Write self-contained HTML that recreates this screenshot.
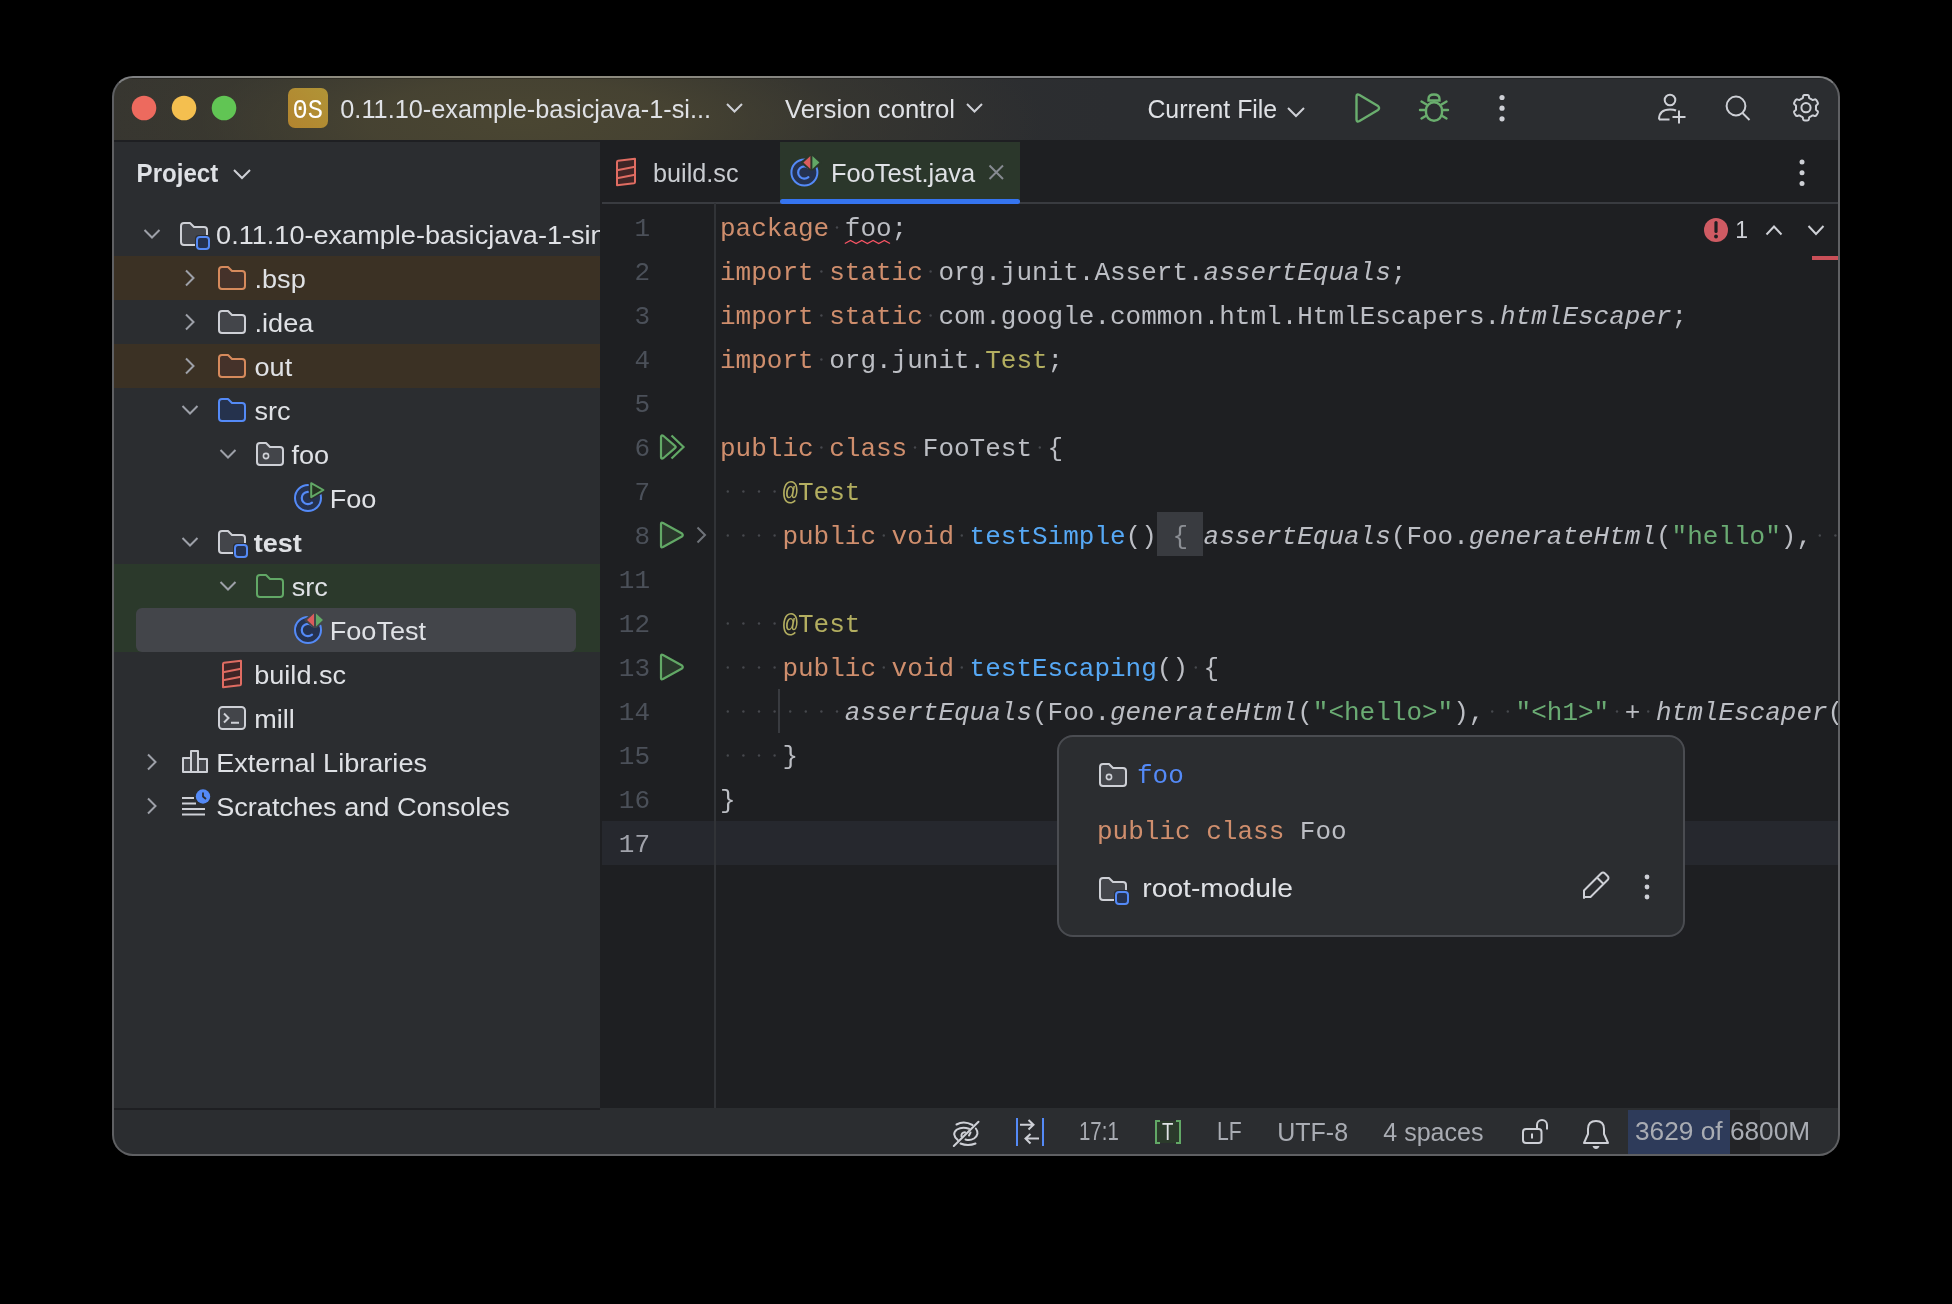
<!DOCTYPE html>
<html><head><meta charset="utf-8">
<style>
*{margin:0;padding:0;box-sizing:border-box}
html,body{width:1952px;height:1304px;background:#000;overflow:hidden}
body{position:relative;font-family:"Liberation Sans",sans-serif;color:#dfe1e5}
.a{position:absolute}
#win{position:absolute;left:0;top:0;width:1952px;height:1304px;clip-path:inset(77px 113px 149px 113px round 20px);background:#2b2d30}
#frame{position:absolute;left:112px;top:76px;width:1728px;height:1080px;border:2px solid #5f6063;border-top-color:#7f8082;border-radius:21px}
svg.ov{position:absolute;left:0;top:0;width:1952px;height:1304px;overflow:visible;will-change:transform}
.s{font-family:"Liberation Sans",sans-serif;font-size:26px}
.m{font-family:"Liberation Mono",monospace;font-size:26px}
</style></head><body>
<div id="win">
  <div class="a" style="left:113px;top:77px;width:1726px;height:63px;background:radial-gradient(ellipse 520px 140px at 410px 45px, rgba(74,70,50,1) 0%, rgba(72,68,50,0.9) 30%, rgba(62,60,48,0.5) 62%, rgba(43,45,48,0) 100%), linear-gradient(to right, #353430 0px, #33332f 200px, #2e2f30 700px, #2b2d30 1000px)"></div>
  <div class="a" style="left:113px;top:78px;width:1726px;height:1px;background:rgba(0,0,0,0.22)"></div>
  <div class="a" style="left:113px;top:140px;width:1726px;height:2px;background:#1e1f22"></div>
  <div class="a" style="left:113px;top:142px;width:487px;height:966px;background:#2b2d30"></div>
  <div class="a" style="left:113px;top:256px;width:487px;height:44px;background:#3b3124"></div>
  <div class="a" style="left:113px;top:344px;width:487px;height:44px;background:#3b3124"></div>
  <div class="a" style="left:113px;top:564px;width:487px;height:88px;background:#2b392b"></div>
  <div class="a" style="left:136px;top:608px;width:440px;height:44px;background:#43454a;border-radius:6px"></div>
  <div class="a" style="left:600px;top:142px;width:2px;height:966px;background:#1e1f22"></div>
  <div class="a" style="left:602px;top:142px;width:1237px;height:966px;background:#1e1f22"></div>
  <div class="a" style="left:780px;top:142px;width:240px;height:61px;background:#2b372b"></div>
  <div class="a" style="left:602px;top:202px;width:1237px;height:2px;background:#393b40"></div>
  <div class="a" style="left:780px;top:198.5px;width:240px;height:5.5px;background:#3574f0;border-radius:3px"></div>
  <div class="a" style="left:602px;top:821px;width:1237px;height:44px;background:#26282e"></div>
  <div class="a" style="left:714px;top:203px;width:2px;height:905px;background:#313337"></div>
  <div class="a" style="left:1157px;top:512px;width:46px;height:44px;background:#393b40"></div>
  <div class="a" style="left:778px;top:689px;width:2px;height:44px;background:#393b40"></div>
  <div class="a" style="left:1812px;top:256px;width:27px;height:4px;background:#c94f58"></div>
  <div class="a" style="left:113px;top:1108px;width:487px;height:2px;background:#1e1f22"></div>
  <div class="a" style="left:113px;top:1110px;width:1726px;height:46px;background:#2b2d30"></div>
  <div class="a" style="left:1628px;top:1110px;width:102px;height:46px;background:#2e3b5a"></div>
  <div class="a" style="left:1730px;top:1110px;width:30px;height:46px;background:#232427"></div>
  <svg class="ov" viewBox="0 0 1952 1304">
<circle cx="144" cy="108" r="12.3" fill="#ed6a5e"/>
<circle cx="184" cy="108" r="12.3" fill="#f4bf4f"/>
<circle cx="224" cy="108" r="12.3" fill="#61c554"/>
<defs><linearGradient id="bg1" x1="0" y1="1" x2="1" y2="0"><stop offset="0" stop-color="#b3842f"/><stop offset="1" stop-color="#b09436"/></linearGradient></defs>
<rect x="288" y="88" width="40" height="40" rx="7" fill="url(#bg1)"/>
<text class="m" x="292.6" y="118" style="font-size:28px" fill="#fff" textLength="30.5" lengthAdjust="spacingAndGlyphs">0S</text>
<text class="s" x="340.3" y="118" style="font-size:26px" fill="#dfe1e5" textLength="370.7" lengthAdjust="spacingAndGlyphs">0.11.10-example-basicjava-1-si...</text>
<path d="M727 104 L734.5 111.5 L742 104" fill="none" stroke="#ced0d6" stroke-width="2"/>
<text class="s" x="785.0" y="118" style="font-size:26px" fill="#dfe1e5" textLength="170.0" lengthAdjust="spacingAndGlyphs">Version control</text>
<path d="M967 104 L974.5 111.5 L982 104" fill="none" stroke="#ced0d6" stroke-width="2"/>
<text class="s" x="1147.4" y="118" style="font-size:26px" fill="#dfe1e5" textLength="129.8" lengthAdjust="spacingAndGlyphs">Current File</text>
<path d="M1288 108 L1296 116 L1304 108" fill="none" stroke="#ced0d6" stroke-width="2"/>
<path d="M1356.5 96.5 Q1356.5 93.5 1359.5 95 L1378 106 Q1380 108 1378 110 L1359.5 121 Q1356.5 122.5 1356.5 119.5 Z" fill="none" stroke="#6aae6e" stroke-width="2.4" stroke-linejoin="round"/>
<g fill="none" stroke="#6aae6e" stroke-width="2.4" stroke-linecap="round">
<path d="M1428.5 100.5 V99 Q1428.5 94.5 1434 94.5 Q1439.5 94.5 1439.5 99 V100.5 Z"/>
<rect x="1426" y="102.3" width="16" height="18.5" rx="8"/>
<path d="M1421.5 101.5 L1426.5 104.5 M1446.5 101.5 L1441.5 104.5 M1420 110 L1425 110 M1448 110 L1443 110 M1421.5 118.5 L1426.5 115.5 M1446.5 118.5 L1441.5 115.5"/></g>
<circle cx="1502" cy="97.5" r="2.6" fill="#ced0d6"/>
<circle cx="1502" cy="108.2" r="2.6" fill="#ced0d6"/>
<circle cx="1502" cy="118.8" r="2.6" fill="#ced0d6"/>
<g fill="none" stroke="#ced0d6" stroke-width="2">
<circle cx="1670" cy="100" r="5.3"/>
<path d="M1659 119.5 Q1659 109.5 1670 109.5 Q1674 109.5 1676 110.5 M1659 119.5 L1669.5 119.5 M1672.5 117 H1685.5 M1679 110.5 V123.5"/>
<circle cx="1736" cy="106" r="9.4"/><path d="M1742.5 113 L1749.5 120"/></g>
<path fill="none" stroke="#ced0d6" stroke-width="2" stroke-linejoin="round" d="M1816.00 107.70 L1816.00 107.44 L1815.99 107.18 L1815.97 106.92 L1815.96 106.65 L1815.94 106.39 L1815.94 106.13 L1815.97 105.85 L1816.11 105.55 L1816.45 105.19 L1817.01 104.75 L1817.55 104.28 L1817.85 103.85 L1817.93 103.47 L1817.89 103.13 L1817.80 102.81 L1817.68 102.50 L1817.55 102.19 L1817.40 101.89 L1817.25 101.59 L1817.09 101.30 L1816.91 101.01 L1816.73 100.73 L1816.54 100.45 L1816.35 100.18 L1816.13 99.92 L1815.90 99.68 L1815.63 99.48 L1815.26 99.36 L1814.74 99.41 L1814.06 99.64 L1813.40 99.90 L1812.92 100.02 L1812.59 99.99 L1812.33 99.88 L1812.10 99.75 L1811.88 99.60 L1811.67 99.45 L1811.45 99.31 L1811.23 99.17 L1811.00 99.04 L1810.77 98.91 L1810.54 98.79 L1810.31 98.67 L1810.07 98.55 L1809.84 98.44 L1809.60 98.31 L1809.39 98.14 L1809.19 97.87 L1809.05 97.39 L1808.95 96.69 L1808.81 95.98 L1808.59 95.51 L1808.31 95.25 L1807.99 95.12 L1807.67 95.03 L1807.34 94.98 L1807.00 94.94 L1806.67 94.92 L1806.34 94.90 L1806.00 94.90 L1805.66 94.90 L1805.33 94.92 L1805.00 94.94 L1804.66 94.98 L1804.33 95.03 L1804.01 95.12 L1803.69 95.25 L1803.41 95.51 L1803.19 95.98 L1803.05 96.69 L1802.95 97.39 L1802.81 97.87 L1802.61 98.14 L1802.40 98.31 L1802.16 98.44 L1801.93 98.55 L1801.69 98.67 L1801.46 98.79 L1801.23 98.91 L1801.00 99.04 L1800.77 99.17 L1800.55 99.31 L1800.33 99.45 L1800.12 99.60 L1799.90 99.75 L1799.67 99.88 L1799.41 99.99 L1799.08 100.02 L1798.60 99.90 L1797.94 99.64 L1797.26 99.41 L1796.74 99.36 L1796.37 99.48 L1796.10 99.68 L1795.87 99.92 L1795.65 100.18 L1795.46 100.45 L1795.27 100.73 L1795.09 101.01 L1794.91 101.30 L1794.75 101.59 L1794.60 101.89 L1794.45 102.19 L1794.32 102.50 L1794.20 102.81 L1794.11 103.13 L1794.07 103.47 L1794.15 103.85 L1794.45 104.28 L1794.99 104.75 L1795.55 105.19 L1795.89 105.55 L1796.03 105.85 L1796.06 106.13 L1796.06 106.39 L1796.04 106.65 L1796.03 106.92 L1796.01 107.18 L1796.00 107.44 L1796.00 107.70 L1796.00 107.96 L1796.01 108.22 L1796.03 108.48 L1796.04 108.75 L1796.06 109.01 L1796.06 109.27 L1796.03 109.55 L1795.89 109.85 L1795.55 110.21 L1794.99 110.65 L1794.45 111.12 L1794.15 111.55 L1794.07 111.93 L1794.11 112.27 L1794.20 112.59 L1794.32 112.90 L1794.45 113.21 L1794.60 113.51 L1794.75 113.81 L1794.91 114.10 L1795.09 114.39 L1795.27 114.67 L1795.46 114.95 L1795.65 115.22 L1795.87 115.48 L1796.10 115.72 L1796.37 115.92 L1796.74 116.04 L1797.26 115.99 L1797.94 115.76 L1798.60 115.50 L1799.08 115.38 L1799.41 115.41 L1799.67 115.52 L1799.90 115.65 L1800.12 115.80 L1800.33 115.95 L1800.55 116.09 L1800.77 116.23 L1801.00 116.36 L1801.23 116.49 L1801.46 116.61 L1801.69 116.73 L1801.93 116.85 L1802.16 116.96 L1802.40 117.09 L1802.61 117.26 L1802.81 117.53 L1802.95 118.01 L1803.05 118.71 L1803.19 119.42 L1803.41 119.89 L1803.69 120.15 L1804.01 120.28 L1804.33 120.37 L1804.66 120.42 L1805.00 120.46 L1805.33 120.48 L1805.66 120.50 L1806.00 120.50 L1806.34 120.50 L1806.67 120.48 L1807.00 120.46 L1807.34 120.42 L1807.67 120.37 L1807.99 120.28 L1808.31 120.15 L1808.59 119.89 L1808.81 119.42 L1808.95 118.71 L1809.05 118.01 L1809.19 117.53 L1809.39 117.26 L1809.60 117.09 L1809.84 116.96 L1810.07 116.85 L1810.31 116.73 L1810.54 116.61 L1810.77 116.49 L1811.00 116.36 L1811.23 116.23 L1811.45 116.09 L1811.67 115.95 L1811.88 115.80 L1812.10 115.65 L1812.33 115.52 L1812.59 115.41 L1812.92 115.38 L1813.40 115.50 L1814.06 115.76 L1814.74 115.99 L1815.26 116.04 L1815.63 115.92 L1815.90 115.72 L1816.13 115.48 L1816.35 115.22 L1816.54 114.95 L1816.73 114.67 L1816.91 114.39 L1817.09 114.10 L1817.25 113.81 L1817.40 113.51 L1817.55 113.21 L1817.68 112.90 L1817.80 112.59 L1817.89 112.27 L1817.93 111.93 L1817.85 111.55 L1817.55 111.12 L1817.01 110.65 L1816.45 110.21 L1816.11 109.85 L1815.97 109.55 L1815.94 109.27 L1815.94 109.01 L1815.96 108.75 L1815.97 108.48 L1815.99 108.22 L1816.00 107.96 Z"/>
<circle cx="1806" cy="107.7" r="4.6" fill="none" stroke="#ced0d6" stroke-width="2"/>
<text class="s" x="136.6" y="182" style="font-size:26px" fill="#dfe1e5" font-weight="bold" textLength="81.7" lengthAdjust="spacingAndGlyphs">Project</text>
<path d="M234 170 L242 178 L250 170" fill="none" stroke="#ced0d6" stroke-width="2"/>
<clipPath id="lp"><rect x="113" y="142" width="487" height="966"/></clipPath><g clip-path="url(#lp)">
<path d="M144.5 230 L152 237.5 L159.5 230" fill="none" stroke="#9da0a8" stroke-width="2"/>
<path transform="translate(178,218) scale(2)" d="M1.5 4 Q1.5 2.5 3 2.5 H6 L8 4.5 H13 Q14.5 4.5 14.5 6 V12 Q14.5 13.5 13 13.5 H3 Q1.5 13.5 1.5 12 Z" fill="#43454a" stroke="#ced0d6" stroke-width="1" stroke-linejoin="round"/><rect x="195" y="235" width="16" height="16" rx="4" fill="#2b2d30"/><rect x="197" y="237" width="12" height="12" rx="3" fill="#253250" stroke="#548af7" stroke-width="2"/>
<text class="s" x="216.1" y="243.5" style="font-size:26px" fill="#dfe1e5" textLength="425.7" lengthAdjust="spacingAndGlyphs">0.11.10-example-basicjava-1-single</text>
<path d="M186 270.5 L193.5 278 L186 285.5" fill="none" stroke="#9da0a8" stroke-width="2"/>
<path transform="translate(216,262) scale(2)" d="M1.5 4 Q1.5 2.5 3 2.5 H6 L8 4.5 H13 Q14.5 4.5 14.5 6 V12 Q14.5 13.5 13 13.5 H3 Q1.5 13.5 1.5 12 Z" fill="#45322a" stroke="#d68a5c" stroke-width="1" stroke-linejoin="round"/>
<text class="s" x="254.5" y="287.5" style="font-size:26px" fill="#dfe1e5" textLength="51.2" lengthAdjust="spacingAndGlyphs">.bsp</text>
<path d="M186 314.5 L193.5 322 L186 329.5" fill="none" stroke="#9da0a8" stroke-width="2"/>
<path transform="translate(216,306) scale(2)" d="M1.5 4 Q1.5 2.5 3 2.5 H6 L8 4.5 H13 Q14.5 4.5 14.5 6 V12 Q14.5 13.5 13 13.5 H3 Q1.5 13.5 1.5 12 Z" fill="#43454a" stroke="#ced0d6" stroke-width="1" stroke-linejoin="round"/>
<text class="s" x="254.5" y="331.5" style="font-size:26px" fill="#dfe1e5" textLength="58.8" lengthAdjust="spacingAndGlyphs">.idea</text>
<path d="M186 358.5 L193.5 366 L186 373.5" fill="none" stroke="#9da0a8" stroke-width="2"/>
<path transform="translate(216,350) scale(2)" d="M1.5 4 Q1.5 2.5 3 2.5 H6 L8 4.5 H13 Q14.5 4.5 14.5 6 V12 Q14.5 13.5 13 13.5 H3 Q1.5 13.5 1.5 12 Z" fill="#45322a" stroke="#d68a5c" stroke-width="1" stroke-linejoin="round"/>
<text class="s" x="254.5" y="375.5" style="font-size:26px" fill="#dfe1e5" textLength="37.7" lengthAdjust="spacingAndGlyphs">out</text>
<path d="M182.5 406 L190 413.5 L197.5 406" fill="none" stroke="#9da0a8" stroke-width="2"/>
<path transform="translate(216,394) scale(2)" d="M1.5 4 Q1.5 2.5 3 2.5 H6 L8 4.5 H13 Q14.5 4.5 14.5 6 V12 Q14.5 13.5 13 13.5 H3 Q1.5 13.5 1.5 12 Z" fill="#25324d" stroke="#548af7" stroke-width="1" stroke-linejoin="round"/>
<text class="s" x="254.5" y="419.5" style="font-size:26px" fill="#dfe1e5" textLength="36.1" lengthAdjust="spacingAndGlyphs">src</text>
<path d="M220.5 450 L228 457.5 L235.5 450" fill="none" stroke="#9da0a8" stroke-width="2"/>
<path transform="translate(254,438) scale(2)" d="M1.5 4 Q1.5 2.5 3 2.5 H6 L8 4.5 H13 Q14.5 4.5 14.5 6 V12 Q14.5 13.5 13 13.5 H3 Q1.5 13.5 1.5 12 Z" fill="#43454a" stroke="#ced0d6" stroke-width="1" stroke-linejoin="round"/><circle cx="266" cy="456" r="2.6" fill="none" stroke="#ced0d6" stroke-width="1.6"/>
<text class="s" x="291.5" y="463.5" style="font-size:26px" fill="#dfe1e5" textLength="37.7" lengthAdjust="spacingAndGlyphs">foo</text>
<circle cx="308" cy="498" r="13" fill="#253250" stroke="#548af7" stroke-width="2"/><path d="M312.0 493.3 A6.2 6.2 0 1 0 312.0 502.7" fill="none" stroke="#548af7" stroke-width="2.2" stroke-linecap="round"/><path d="M311.2 483.2 L323.4 490 L311.2 497.1 Z" fill="#253322" stroke="#2b2d30" stroke-width="5" stroke-linejoin="round"/><path d="M311.2 483.2 L323.4 490 L311.2 497.1 Z" fill="#253322" stroke="#62a866" stroke-width="2" stroke-linejoin="round"/>
<text class="s" x="329.7" y="507.5" style="font-size:26px" fill="#dfe1e5" textLength="46.7" lengthAdjust="spacingAndGlyphs">Foo</text>
<path d="M182.5 538 L190 545.5 L197.5 538" fill="none" stroke="#9da0a8" stroke-width="2"/>
<path transform="translate(216,526) scale(2)" d="M1.5 4 Q1.5 2.5 3 2.5 H6 L8 4.5 H13 Q14.5 4.5 14.5 6 V12 Q14.5 13.5 13 13.5 H3 Q1.5 13.5 1.5 12 Z" fill="#43454a" stroke="#ced0d6" stroke-width="1" stroke-linejoin="round"/><rect x="233" y="543" width="16" height="16" rx="4" fill="#2b2d30"/><rect x="235" y="545" width="12" height="12" rx="3" fill="#253250" stroke="#548af7" stroke-width="2"/>
<text class="s" x="253.7" y="551.5" style="font-size:26px" fill="#dfe1e5" font-weight="bold" textLength="48.2" lengthAdjust="spacingAndGlyphs">test</text>
<path d="M220.5 582 L228 589.5 L235.5 582" fill="none" stroke="#9da0a8" stroke-width="2"/>
<path transform="translate(254,570) scale(2)" d="M1.5 4 Q1.5 2.5 3 2.5 H6 L8 4.5 H13 Q14.5 4.5 14.5 6 V12 Q14.5 13.5 13 13.5 H3 Q1.5 13.5 1.5 12 Z" fill="#2b392b" stroke="#62a866" stroke-width="1" stroke-linejoin="round"/>
<text class="s" x="291.7" y="595.5" style="font-size:26px" fill="#dfe1e5" textLength="36.1" lengthAdjust="spacingAndGlyphs">src</text>
<circle cx="308" cy="630" r="13" fill="#253250" stroke="#548af7" stroke-width="2"/><path d="M312.0 625.3 A6.2 6.2 0 1 0 312.0 634.7" fill="none" stroke="#548af7" stroke-width="2.2" stroke-linecap="round"/><path d="M306 620 L314 613.5 L314 626.5 Z M316 613.5 L324 620 L316 626.5 Z" fill="none" stroke="#43454a" stroke-width="3" stroke-linejoin="round"/><path d="M307 620 L314 613.5 L314 626.5 Z" fill="#db5c5c"/><path d="M316 613.5 L323 620 L316 626.5 Z" fill="#62a866"/>
<text class="s" x="329.7" y="639.5" style="font-size:26px" fill="#dfe1e5" textLength="96.4" lengthAdjust="spacingAndGlyphs">FooTest</text>
<path d="M223 664 Q223 663 224 662.8 L241 660.8 L241 684 Q241 685 240 685.2 L223 687.2 Z" fill="#3f2526" stroke="#e06c62" stroke-width="2" stroke-linejoin="round"/><path d="M223 672.3 L241 668.8 M223 680.3 L241 676.8" stroke="#e06c62" stroke-width="2"/>
<text class="s" x="254.2" y="683.5" style="font-size:26px" fill="#dfe1e5" textLength="91.9" lengthAdjust="spacingAndGlyphs">build.sc</text>
<rect x="219" y="707" width="26" height="22" rx="3.5" fill="#43454a" stroke="#ced0d6" stroke-width="2"/>
<path d="M224 713.5 L228.5 718 L224 722.5 M231 722.8 H239" fill="none" stroke="#ced0d6" stroke-width="2"/>
<text class="s" x="254.2" y="727.5" style="font-size:26px" fill="#dfe1e5" textLength="40.6" lengthAdjust="spacingAndGlyphs">mill</text>
<path d="M148 754.5 L155.5 762 L148 769.5" fill="none" stroke="#9da0a8" stroke-width="2"/>
<g fill="#43454a" stroke="#ced0d6" stroke-width="2" stroke-linejoin="round"><rect x="183" y="758" width="8" height="14"/><rect x="191" y="751" width="7" height="21"/><rect x="198" y="759" width="9" height="13"/></g>
<text class="s" x="216.2" y="771.5" style="font-size:26px" fill="#dfe1e5" textLength="210.8" lengthAdjust="spacingAndGlyphs">External Libraries</text>
<path d="M148 798.5 L155.5 806 L148 813.5" fill="none" stroke="#9da0a8" stroke-width="2"/>
<path d="M182 798 H194 M182 803.5 H196 M182 809 H205 M182 814.5 H205" stroke="#ced0d6" stroke-width="2"/>
<circle cx="203" cy="796.5" r="7.2" fill="#548af7"/><path d="M203 792.5 V796.5 L206 799" stroke="#2b2d30" stroke-width="1.8" fill="none"/>
<text class="s" x="216.2" y="815.5" style="font-size:26px" fill="#dfe1e5" textLength="293.7" lengthAdjust="spacingAndGlyphs">Scratches and Consoles</text>
</g>
<path d="M617 162 Q617 161 618 160.8 L635 158.8 L635 182 Q635 183 634 183.2 L617 185.2 Z" fill="#3f2526" stroke="#e06c62" stroke-width="2" stroke-linejoin="round"/><path d="M617 170.3 L635 166.8 M617 178.3 L635 174.8" stroke="#e06c62" stroke-width="2"/>
<text class="s" x="653.0" y="181.7" style="font-size:26px" fill="#c9ccd1" textLength="85.5" lengthAdjust="spacingAndGlyphs">build.sc</text>
<circle cx="804.4" cy="172.5" r="13" fill="#253250" stroke="#548af7" stroke-width="2"/><path d="M808.4 167.8 A6.2 6.2 0 1 0 808.4 177.2" fill="none" stroke="#548af7" stroke-width="2.2" stroke-linecap="round"/><path d="M802.4 162.5 L810.4 156.0 L810.4 169.0 Z M812.4 156.0 L820.4 162.5 L812.4 169.0 Z" fill="none" stroke="#2b372b" stroke-width="3" stroke-linejoin="round"/><path d="M803.4 162.5 L810.4 156.0 L810.4 169.0 Z" fill="#db5c5c"/><path d="M812.4 156.0 L819.4 162.5 L812.4 169.0 Z" fill="#62a866"/>
<text class="s" x="831.0" y="181.7" style="font-size:26px" fill="#dfe1e5" textLength="144.2" lengthAdjust="spacingAndGlyphs">FooTest.java</text>
<path d="M989.5 165.5 L1003 179 M1003 165.5 L989.5 179" stroke="#868a91" stroke-width="2"/>
<circle cx="1802" cy="162" r="2.5" fill="#ced0d6"/>
<circle cx="1802" cy="172.7" r="2.5" fill="#ced0d6"/>
<circle cx="1802" cy="183.4" r="2.5" fill="#ced0d6"/>
<circle cx="1716" cy="230" r="12" fill="#cf5b63"/>
<path d="M1716 222.5 V231.5" stroke="#1e1f22" stroke-width="3.2" stroke-linecap="round"/><circle cx="1716" cy="236.5" r="1.9" fill="#1e1f22"/>
<text class="s" x="1735.2" y="238" style="font-size:23px" fill="#ced0d6">1</text>
<path d="M1766.5 234.5 L1774 226.5 L1781.5 234.5 M1808.5 226 L1816 234 L1823.5 226" fill="none" stroke="#ced0d6" stroke-width="2"/>
<path d="M661 437 Q661 434.5 663.5 436 L675 445.8 Q676.5 447 675 448.2 L663.5 458 Q661 459.5 661 457 Z" fill="#29362b" stroke="#62a866" stroke-width="2.2" stroke-linejoin="round"/>
<path d="M671.5 435.5 L683.5 447 L671.5 458.5" fill="none" stroke="#62a866" stroke-width="2.2"/>
<path d="M661 524 Q661 522 663 523 L682 533.5 Q683.5 535 682 536.5 L663 547 Q661 548 661 546 Z" fill="#29362b" stroke="#62a866" stroke-width="2.2" stroke-linejoin="round"/>
<path d="M661 656 Q661 654 663 655 L682 665.5 Q683.5 667 682 668.5 L663 679 Q661 680 661 678 Z" fill="#29362b" stroke="#62a866" stroke-width="2.2" stroke-linejoin="round"/>
<path d="M697.5 527.5 L705 535 L697.5 542.5" fill="none" stroke="#6f737a" stroke-width="2"/>
<clipPath id="ed"><rect x="602" y="203" width="1237" height="905"/></clipPath><g clip-path="url(#ed)">
<text class="m" x="650" y="236" text-anchor="end" fill="#4b5059">1</text>
<text class="m" x="720.0" y="236" fill="#cf8e6d" xml:space="preserve">package</text>
<circle cx="837.0" cy="227.5" r="1.2" fill="#46484d"/>
<text class="m" x="844.8" y="236" fill="#bcbec4" xml:space="preserve">foo</text>
<text class="m" x="891.6" y="236" fill="#bcbec4" xml:space="preserve">;</text>
<text class="m" x="650" y="280" text-anchor="end" fill="#4b5059">2</text>
<text class="m" x="720.0" y="280" fill="#cf8e6d" xml:space="preserve">import</text>
<circle cx="821.4" cy="271.5" r="1.2" fill="#46484d"/>
<text class="m" x="829.2" y="280" fill="#cf8e6d" xml:space="preserve">static</text>
<circle cx="930.6" cy="271.5" r="1.2" fill="#46484d"/>
<text class="m" x="938.4" y="280" fill="#bcbec4" xml:space="preserve">org.junit.Assert.</text>
<text class="m" x="1203.6" y="280" fill="#bcbec4" font-style="italic" xml:space="preserve">assertEquals</text>
<text class="m" x="1390.8" y="280" fill="#bcbec4" xml:space="preserve">;</text>
<text class="m" x="650" y="324" text-anchor="end" fill="#4b5059">3</text>
<text class="m" x="720.0" y="324" fill="#cf8e6d" xml:space="preserve">import</text>
<circle cx="821.4" cy="315.5" r="1.2" fill="#46484d"/>
<text class="m" x="829.2" y="324" fill="#cf8e6d" xml:space="preserve">static</text>
<circle cx="930.6" cy="315.5" r="1.2" fill="#46484d"/>
<text class="m" x="938.4" y="324" fill="#bcbec4" xml:space="preserve">com.google.common.html.HtmlEscapers.</text>
<text class="m" x="1500.0" y="324" fill="#bcbec4" font-style="italic" xml:space="preserve">htmlEscaper</text>
<text class="m" x="1671.6" y="324" fill="#bcbec4" xml:space="preserve">;</text>
<text class="m" x="650" y="368" text-anchor="end" fill="#4b5059">4</text>
<text class="m" x="720.0" y="368" fill="#cf8e6d" xml:space="preserve">import</text>
<circle cx="821.4" cy="359.5" r="1.2" fill="#46484d"/>
<text class="m" x="829.2" y="368" fill="#bcbec4" xml:space="preserve">org.junit.</text>
<text class="m" x="985.2" y="368" fill="#b3ae60" xml:space="preserve">Test</text>
<text class="m" x="1047.6" y="368" fill="#bcbec4" xml:space="preserve">;</text>
<text class="m" x="650" y="412" text-anchor="end" fill="#4b5059">5</text>
<text class="m" x="650" y="456" text-anchor="end" fill="#4b5059">6</text>
<text class="m" x="720.0" y="456" fill="#cf8e6d" xml:space="preserve">public</text>
<circle cx="821.4" cy="447.5" r="1.2" fill="#46484d"/>
<text class="m" x="829.2" y="456" fill="#cf8e6d" xml:space="preserve">class</text>
<circle cx="915.0" cy="447.5" r="1.2" fill="#46484d"/>
<text class="m" x="922.8" y="456" fill="#bcbec4" xml:space="preserve">FooTest</text>
<circle cx="1039.8" cy="447.5" r="1.2" fill="#46484d"/>
<text class="m" x="1047.6" y="456" fill="#bcbec4" xml:space="preserve">{</text>
<text class="m" x="650" y="500" text-anchor="end" fill="#4b5059">7</text>
<circle cx="727.8" cy="491.5" r="1.2" fill="#46484d"/>
<circle cx="743.4" cy="491.5" r="1.2" fill="#46484d"/>
<circle cx="759.0" cy="491.5" r="1.2" fill="#46484d"/>
<circle cx="774.6" cy="491.5" r="1.2" fill="#46484d"/>
<text class="m" x="782.4" y="500" fill="#b3ae60" xml:space="preserve">@Test</text>
<text class="m" x="650" y="544" text-anchor="end" fill="#4b5059">8</text>
<circle cx="727.8" cy="535.5" r="1.2" fill="#46484d"/>
<circle cx="743.4" cy="535.5" r="1.2" fill="#46484d"/>
<circle cx="759.0" cy="535.5" r="1.2" fill="#46484d"/>
<circle cx="774.6" cy="535.5" r="1.2" fill="#46484d"/>
<text class="m" x="782.4" y="544" fill="#cf8e6d" xml:space="preserve">public</text>
<circle cx="883.8" cy="535.5" r="1.2" fill="#46484d"/>
<text class="m" x="891.6" y="544" fill="#cf8e6d" xml:space="preserve">void</text>
<circle cx="961.8" cy="535.5" r="1.2" fill="#46484d"/>
<text class="m" x="969.6" y="544" fill="#56a8f5" xml:space="preserve">testSimple</text>
<text class="m" x="1125.6" y="544" fill="#bcbec4" xml:space="preserve">()</text>
<text class="m" x="1172.4" y="544" fill="#8c8f95">{</text>
<text class="m" x="1203.6" y="544" fill="#bcbec4" font-style="italic" xml:space="preserve">assertEquals</text>
<text class="m" x="1390.8" y="544" fill="#bcbec4" xml:space="preserve">(Foo.</text>
<text class="m" x="1468.8" y="544" fill="#bcbec4" font-style="italic" xml:space="preserve">generateHtml</text>
<text class="m" x="1656.0" y="544" fill="#bcbec4" xml:space="preserve">(</text>
<text class="m" x="1671.6" y="544" fill="#6aab73" xml:space="preserve">"hello"</text>
<text class="m" x="1780.8" y="544" fill="#bcbec4" xml:space="preserve">),</text>
<circle cx="1819.8" cy="535.5" r="1.2" fill="#46484d"/>
<circle cx="1835.4" cy="535.5" r="1.2" fill="#46484d"/>
<text class="m" x="650" y="588" text-anchor="end" fill="#4b5059">11</text>
<text class="m" x="650" y="632" text-anchor="end" fill="#4b5059">12</text>
<circle cx="727.8" cy="623.5" r="1.2" fill="#46484d"/>
<circle cx="743.4" cy="623.5" r="1.2" fill="#46484d"/>
<circle cx="759.0" cy="623.5" r="1.2" fill="#46484d"/>
<circle cx="774.6" cy="623.5" r="1.2" fill="#46484d"/>
<text class="m" x="782.4" y="632" fill="#b3ae60" xml:space="preserve">@Test</text>
<text class="m" x="650" y="676" text-anchor="end" fill="#4b5059">13</text>
<circle cx="727.8" cy="667.5" r="1.2" fill="#46484d"/>
<circle cx="743.4" cy="667.5" r="1.2" fill="#46484d"/>
<circle cx="759.0" cy="667.5" r="1.2" fill="#46484d"/>
<circle cx="774.6" cy="667.5" r="1.2" fill="#46484d"/>
<text class="m" x="782.4" y="676" fill="#cf8e6d" xml:space="preserve">public</text>
<circle cx="883.8" cy="667.5" r="1.2" fill="#46484d"/>
<text class="m" x="891.6" y="676" fill="#cf8e6d" xml:space="preserve">void</text>
<circle cx="961.8" cy="667.5" r="1.2" fill="#46484d"/>
<text class="m" x="969.6" y="676" fill="#56a8f5" xml:space="preserve">testEscaping</text>
<text class="m" x="1156.8" y="676" fill="#bcbec4" xml:space="preserve">()</text>
<circle cx="1195.8" cy="667.5" r="1.2" fill="#46484d"/>
<text class="m" x="1203.6" y="676" fill="#bcbec4" xml:space="preserve">{</text>
<text class="m" x="650" y="720" text-anchor="end" fill="#4b5059">14</text>
<circle cx="727.8" cy="711.5" r="1.2" fill="#46484d"/>
<circle cx="743.4" cy="711.5" r="1.2" fill="#46484d"/>
<circle cx="759.0" cy="711.5" r="1.2" fill="#46484d"/>
<circle cx="774.6" cy="711.5" r="1.2" fill="#46484d"/>
<circle cx="790.2" cy="711.5" r="1.2" fill="#46484d"/>
<circle cx="805.8" cy="711.5" r="1.2" fill="#46484d"/>
<circle cx="821.4" cy="711.5" r="1.2" fill="#46484d"/>
<circle cx="837.0" cy="711.5" r="1.2" fill="#46484d"/>
<text class="m" x="844.8" y="720" fill="#bcbec4" font-style="italic" xml:space="preserve">assertEquals</text>
<text class="m" x="1032.0" y="720" fill="#bcbec4" xml:space="preserve">(Foo.</text>
<text class="m" x="1110.0" y="720" fill="#bcbec4" font-style="italic" xml:space="preserve">generateHtml</text>
<text class="m" x="1297.2" y="720" fill="#bcbec4" xml:space="preserve">(</text>
<text class="m" x="1312.8" y="720" fill="#6aab73" xml:space="preserve">"&lt;hello&gt;"</text>
<text class="m" x="1453.2" y="720" fill="#bcbec4" xml:space="preserve">),</text>
<circle cx="1492.2" cy="711.5" r="1.2" fill="#46484d"/>
<circle cx="1507.8" cy="711.5" r="1.2" fill="#46484d"/>
<text class="m" x="1515.6" y="720" fill="#6aab73" xml:space="preserve">"&lt;h1&gt;"</text>
<circle cx="1617.0" cy="711.5" r="1.2" fill="#46484d"/>
<text class="m" x="1624.8" y="720" fill="#bcbec4" xml:space="preserve">+</text>
<circle cx="1648.2" cy="711.5" r="1.2" fill="#46484d"/>
<text class="m" x="1656.0" y="720" fill="#bcbec4" font-style="italic" xml:space="preserve">htmlEscaper</text>
<text class="m" x="1827.6" y="720" fill="#bcbec4" xml:space="preserve">(</text>
<text class="m" x="650" y="764" text-anchor="end" fill="#4b5059">15</text>
<circle cx="727.8" cy="755.5" r="1.2" fill="#46484d"/>
<circle cx="743.4" cy="755.5" r="1.2" fill="#46484d"/>
<circle cx="759.0" cy="755.5" r="1.2" fill="#46484d"/>
<circle cx="774.6" cy="755.5" r="1.2" fill="#46484d"/>
<text class="m" x="782.4" y="764" fill="#bcbec4" xml:space="preserve">}</text>
<text class="m" x="650" y="808" text-anchor="end" fill="#4b5059">16</text>
<text class="m" x="720.0" y="808" fill="#bcbec4" xml:space="preserve">}</text>
<text class="m" x="650" y="852" text-anchor="end" fill="#a1a3ab">17</text>
<path d="M844.8 243.5 L850.5 240.5 L856.1 243.5 L861.8 240.5 L867.4 243.5 L873.1 240.5 L878.7 243.5 L884.4 240.5 L890.0 243.5" fill="none" stroke="#f75464" stroke-width="1.4"/>
</g>
<g fill="none" stroke="#ced0d6" stroke-width="2" stroke-linecap="round">
<path d="M956.5 1124.5 Q964 1120.5 972.5 1125"/>
<path d="M957.8 1140 Q951 1134 957 1129.5 Q962 1126.5 969 1128.7"/>
<path d="M975.8 1128.5 Q980 1134 974 1138.5 Q970 1141 965.5 1139.5"/>
<path d="M961.5 1136.5 Q961 1132.5 965 1132.3"/>
<path d="M970.5 1132.5 L969 1135.5"/>
<path d="M960.5 1143.5 Q968 1146.5 975.5 1143.5"/>
<path d="M953.8 1146 L978.5 1121.8"/></g>
<path d="M1017 1118 V1146 M1043 1118 V1146" stroke="#548af7" stroke-width="2"/>
<path d="M1020 1124.7 H1033 M1028.5 1120 L1033.5 1124.7 L1028.5 1129.5 M1039 1138.6 H1026 M1030.5 1134 L1025.5 1138.6 L1030.5 1143.5" fill="none" stroke="#ced0d6" stroke-width="2"/>
<text class="s" x="1079.0" y="1140.2" style="font-size:26px" fill="#a9acb3" textLength="39.8" lengthAdjust="spacingAndGlyphs">17:1</text>
<rect x="1155" y="1121" width="26" height="22" rx="2" fill="#2b3a2b"/>
<path d="M1160 1121 H1156 V1143 H1160 M1176 1121 H1180 V1143 H1176" fill="none" stroke="#62a866" stroke-width="2"/>
<text class="s" x="1162.0" y="1140" style="font-size:24px" fill="#dfe1e5" textLength="11.4" lengthAdjust="spacingAndGlyphs">T</text>
<text class="s" x="1217.0" y="1140.2" style="font-size:26px" fill="#a9acb3" textLength="24.7" lengthAdjust="spacingAndGlyphs">LF</text>
<text class="s" x="1277.2" y="1140.5" style="font-size:26px" fill="#a9acb3" textLength="70.9" lengthAdjust="spacingAndGlyphs">UTF-8</text>
<text class="s" x="1383.3" y="1140.5" style="font-size:26px" fill="#a9acb3" textLength="100.2" lengthAdjust="spacingAndGlyphs">4 spaces</text>
<rect x="1523" y="1129" width="18.5" height="14" rx="3" fill="none" stroke="#ced0d6" stroke-width="2"/><path d="M1532 1133.5 V1138.5" stroke="#ced0d6" stroke-width="2"/><path d="M1537 1128.5 V1125 A5 5 0 0 1 1547 1125 V1129.5" fill="none" stroke="#ced0d6" stroke-width="2"/>
<path d="M1584 1143 H1608 L1604 1134 V1129 Q1604 1121 1596 1121 Q1588 1121 1588 1129 V1134 Z" fill="none" stroke="#ced0d6" stroke-width="2" stroke-linejoin="round"/><path d="M1592.5 1146 H1599.5 Q1598.5 1149 1596 1149 Q1593.5 1149 1592.5 1146 Z" fill="#ced0d6"/>
<text class="s" x="1635.0" y="1140" style="font-size:26px" fill="#a9acb3" textLength="175.2" lengthAdjust="spacingAndGlyphs">3629 of 6800M</text>
  </svg>
  <div class="a" style="left:1057px;top:735px;width:628px;height:202px;background:#2b2d30;border:2px solid #4a4c51;border-radius:16px"></div>
  <svg class="ov" viewBox="0 0 1952 1304">
<path transform="translate(1097,759) scale(2)" d="M1.5 4 Q1.5 2.5 3 2.5 H6 L8 4.5 H13 Q14.5 4.5 14.5 6 V12 Q14.5 13.5 13 13.5 H3 Q1.5 13.5 1.5 12 Z" fill="#43454a" stroke="#ced0d6" stroke-width="1" stroke-linejoin="round"/><circle cx="1109" cy="777" r="2.6" fill="none" stroke="#ced0d6" stroke-width="1.6"/>
<text class="m" x="1137" y="783" fill="#548af7">foo</text>
<text class="m" x="1097" y="839" fill="#cf8e6d">public class</text>
<text class="m" x="1299.8" y="839" fill="#bcbec4">Foo</text>
<path transform="translate(1097,873) scale(2)" d="M1.5 4 Q1.5 2.5 3 2.5 H6 L8 4.5 H13 Q14.5 4.5 14.5 6 V12 Q14.5 13.5 13 13.5 H3 Q1.5 13.5 1.5 12 Z" fill="#43454a" stroke="#ced0d6" stroke-width="1" stroke-linejoin="round"/><rect x="1114" y="890" width="16" height="16" rx="4" fill="#2b2d30"/><rect x="1116" y="892" width="12" height="12" rx="3" fill="#253250" stroke="#548af7" stroke-width="2"/>
<text class="s" x="1142.3" y="897" style="font-size:26px" fill="#dfe1e5" textLength="150.7" lengthAdjust="spacingAndGlyphs">root-module</text>
<path d="M1584 898 V890.5 L1601 873.5 Q1603 871.5 1605 873.5 L1607.5 876 Q1609.5 878 1607.5 880 L1590.5 897 H1584 Z M1597 877.5 L1603.5 884" fill="none" stroke="#ced0d6" stroke-width="2" stroke-linejoin="round"/>
<circle cx="1647" cy="877" r="2.4" fill="#ced0d6"/>
<circle cx="1647" cy="887" r="2.4" fill="#ced0d6"/>
<circle cx="1647" cy="897" r="2.4" fill="#ced0d6"/>
  </svg>
</div>
<div id="frame"></div>
<div class="a" style="left:140px;top:76px;width:800px;height:2px;background:linear-gradient(to right, rgba(127,128,130,0), #8e8b7e 25%, #8e8b7e 55%, rgba(127,128,130,0))"></div>
</body></html>
